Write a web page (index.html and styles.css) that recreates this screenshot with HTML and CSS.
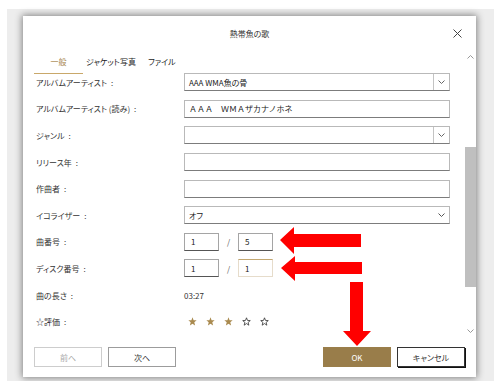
FILE: index.html
```html
<!DOCTYPE html>
<html lang="ja">
<head>
    <meta charset="UTF-8">
    <meta name="viewport" content="width=device-width, initial-scale=1.0">
    <title>熱帯魚の歌</title>
    <link rel="stylesheet" href="styles.css">
</head>
<body>
    <div class="screen">
        <div class="dialog">
            <div class="titlebar">
                <span class="title">熱帯魚の歌</span>
                <svg class="close" width="9" height="9" viewBox="0 0 9 9">
                    <path d="M0.5 0.5 L8.5 8.5 M8.5 0.5 L0.5 8.5" stroke="#444" stroke-width="1" fill="none"/>
                </svg>
            </div>

            <div class="body">
                <div class="main">
                    <div class="tabs">
                        <span class="tab active">一般</span>
                        <span class="tab tab-jacket">ジャケット写真</span>
                        <span class="tab">ファイル</span>
                    </div>

                    <div class="viewport">
                        <div class="form">
                            <span class="label">アルバムアーティスト</span>
                            <div class="field combo">
                                <span class="value">AAA WMA魚の骨</span>
                                <span class="drop"><svg width="7" height="4" viewBox="0 0 7 4"><path d="M0.5 0.5 L3.5 3.5 L6.5 0.5" stroke="#666" fill="none"/></svg></span>
                            </div>

                            <span class="label">アルバムアーティスト (読み)</span>
                            <div class="field"><span class="value wide">ＡＡＡ　ＷＭＡザカナノホネ</span></div>

                            <span class="label">ジャンル</span>
                            <div class="field combo">
                                <span class="value"></span>
                                <span class="drop"><svg width="7" height="4" viewBox="0 0 7 4"><path d="M0.5 0.5 L3.5 3.5 L6.5 0.5" stroke="#666" fill="none"/></svg></span>
                            </div>

                            <span class="label">リリース年</span>
                            <div class="field"></div>

                            <span class="label">作曲者</span>
                            <div class="field"></div>

                            <span class="label">イコライザー</span>
                            <div class="field select">
                                <span class="value">オフ</span>
                                <svg width="7" height="4" viewBox="0 0 7 4"><path d="M0.5 0.5 L3.5 3.5 L6.5 0.5" stroke="#555" fill="none"/></svg>
                            </div>

                            <span class="label">曲番号</span>
                            <div class="pair">
                                <div class="field small"><span class="value">1</span></div>
                                <span class="slash">/</span>
                                <div class="field small"><span class="value">5</span></div>
                            </div>

                            <span class="label">ディスク番号</span>
                            <div class="pair">
                                <div class="field small"><span class="value">1</span></div>
                                <span class="slash">/</span>
                                <div class="field small focused"><span class="value">1</span></div>
                            </div>

                            <span class="label">曲の長さ</span>
                            <span class="plain">03:27</span>

                            <span class="label">☆評価</span>
                            <div class="stars">
                                <svg class="star" viewBox="0 0 10 10"><path d="M5 0.4 L6.2 3.5 L9.6 3.7 L7 5.9 L7.9 9.4 L5 7.5 L2.1 9.4 L3 5.9 L0.4 3.7 L3.8 3.5 Z" fill="#a98a4f"/></svg>
                                <svg class="star" viewBox="0 0 10 10"><path d="M5 0.4 L6.2 3.5 L9.6 3.7 L7 5.9 L7.9 9.4 L5 7.5 L2.1 9.4 L3 5.9 L0.4 3.7 L3.8 3.5 Z" fill="#a98a4f"/></svg>
                                <svg class="star" viewBox="0 0 10 10"><path d="M5 0.4 L6.2 3.5 L9.6 3.7 L7 5.9 L7.9 9.4 L5 7.5 L2.1 9.4 L3 5.9 L0.4 3.7 L3.8 3.5 Z" fill="#a98a4f"/></svg>
                                <svg class="star" viewBox="0 0 10 10"><path d="M5 0.9 L6.1 3.8 L9.2 4 L6.8 6 L7.6 9.1 L5 7.3 L2.4 9.1 L3.2 6 L0.8 4 L3.9 3.8 Z" fill="none" stroke="#333" stroke-width="0.9"/></svg>
                                <svg class="star" viewBox="0 0 10 10"><path d="M5 0.9 L6.1 3.8 L9.2 4 L6.8 6 L7.6 9.1 L5 7.3 L2.4 9.1 L3.2 6 L0.8 4 L3.9 3.8 Z" fill="none" stroke="#333" stroke-width="0.9"/></svg>
                            </div>
                        </div>
                    </div>
                </div>

                <div class="scrollbar">
                    <div class="sb-btn"><svg width="7" height="4" viewBox="0 0 7 4"><path d="M0.5 3.5 L3.5 0.5 L6.5 3.5" stroke="#999" fill="none"/></svg></div>
                    <div class="sb-track"><div class="sb-thumb"></div></div>
                    <div class="sb-btn"><svg width="7" height="4" viewBox="0 0 7 4"><path d="M0.5 0.5 L3.5 3.5 L6.5 0.5" stroke="#999" fill="none"/></svg></div>
                </div>
            </div>

            <div class="footer">
                <button class="btn disabled">前へ</button>
                <button class="btn">次へ</button>
                <button class="btn primary">OK</button>
                <button class="btn cancel">キャンセル</button>
            </div>
        </div>
    </div>

    <!-- red annotation arrows drawn over the dialog -->
    <svg class="arrows" width="494" height="381" viewBox="0 0 494 381">
        <polygon points="280,240 294,227 294,234 361,234 361,247 294,247 294,254" fill="#ff0000"/>
        <polygon points="281,268 295,256 295,262 362,262 362,274 295,274 295,281" fill="#ff0000"/>
        <polygon points="350,282 363,282 363,331 371,331 357,346 343,331 350,331" fill="#ff0000"/>
    </svg>
</body>
</html>
```

FILE: styles.css
```css
body {
    margin: 0;
    background-color: #fff;
    font-family: "Noto Sans CJK JP", "Noto Sans", sans-serif;
    font-size: 8px;
    color: #222;
}

.screen {
    margin: 9px 0 0 7px;
    padding: 7px 0 0 16px;
    height: 365px;
    background-color: #ededed;
}

.dialog {
    width: 453px;
    height: 361px;
    background-color: #fff;
    box-shadow: 0 0 7px 1px rgba(0, 0, 0, 0.45);
    display: flex;
    flex-direction: column;
}

.titlebar {
    height: 34px;
    display: grid;
    grid-template-columns: 1fr auto 1fr;
    align-items: center;
    flex-shrink: 0;
}

.title {
    grid-column: 2;
    color: #333;
    font-feature-settings: "palt";
}

.close {
    grid-column: 3;
    justify-self: end;
    margin-right: 14px;
}

.body {
    flex: 1;
    display: flex;
    min-height: 0;
}

.main {
    flex: 1;
    display: flex;
    flex-direction: column;
    min-width: 0;
}

.tabs {
    height: 24px;
    padding-left: 11px;
    display: flex;
    flex-shrink: 0;
    position: relative;
    z-index: 1;
    font-feature-settings: "palt";
}

.tab {
    line-height: 23px;
    color: #222;
}

.tab.active {
    width: 49px;
    text-align: center;
    color: #a5844b;
    border-bottom: 1px solid #c9a86a;
}

.tab-jacket {
    width: 62px;
    margin-left: 3px;
}

.viewport {
    flex: 1;
    overflow: hidden;
    margin-top: -1px;
}

.form {
    display: grid;
    grid-template-columns: 148px 266px;
    grid-auto-rows: 26.6px;
    align-items: center;
    padding-left: 13px;
    margin-top: -4px;
}

.label {
    color: #333;
    font-feature-settings: "palt";
    white-space: nowrap;
}

.label::after {
    content: ":";
    margin-left: 4px;
}

.field {
    height: 18px;
    box-sizing: border-box;
    border: 1px solid #b9b9b9;
    border-bottom-color: #7c7c7c;
    display: flex;
    align-items: center;
    padding-left: 4px;
    font-feature-settings: "palt";
}

.field .value {
    flex: 1;
    white-space: nowrap;
}

.field .value.wide {
    font-feature-settings: normal;
}

.combo {
    padding-right: 0;
}

.combo .drop {
    width: 15px;
    height: 100%;
    border-left: 1px solid #c4c4c4;
    display: flex;
    align-items: center;
    justify-content: center;
}

.select {
    padding-right: 4px;
}

.pair {
    display: flex;
    align-items: center;
}

.field.small {
    width: 35px;
    border-color: #a5a5a5;
    border-bottom-color: #555;
    padding-left: 6px;
}

.field.focused {
    border-color: #e6dccb;
    border-top-color: #c3a872;
}

.slash {
    width: 19px;
    text-align: center;
    color: #555;
}

.plain {
    color: #333;
}

.stars {
    display: flex;
    gap: 9px;
    margin-left: 4px;
}

.star {
    width: 9px;
    height: 9px;
}

.scrollbar {
    width: 11px;
    display: flex;
    flex-direction: column;
    padding-bottom: 9px;
}

.sb-btn {
    height: 14px;
    display: flex;
    align-items: center;
    justify-content: center;
}

.sb-track {
    flex: 1;
}

.sb-thumb {
    margin-top: 83px;
    height: 140px;
    background-color: #bfbfbf;
}

.footer {
    height: 30px;
    box-sizing: border-box;
    padding: 0 11px 10px;
    display: flex;
    align-items: flex-end;
    gap: 6px;
    flex-shrink: 0;
}

.btn {
    width: 68px;
    height: 20px;
    box-sizing: border-box;
    border: 1px solid #9c9c9c;
    background-color: #fff;
    font-family: inherit;
    font-size: 8px;
    color: #333;
    padding: 0;
    font-feature-settings: "palt";
}

.btn.disabled {
    border-color: #cdcdcd;
    color: #a8a8a8;
}

.btn.primary {
    margin-left: auto;
    border-color: #9a7e4a;
    background-color: #997d4a;
    color: #fff;
}

.btn.cancel {
    border-color: #333;
    box-shadow: 1px 1px 0 #111;
}

.arrows {
    position: absolute;
    top: 0;
    left: 0;
    pointer-events: none;
}
```
